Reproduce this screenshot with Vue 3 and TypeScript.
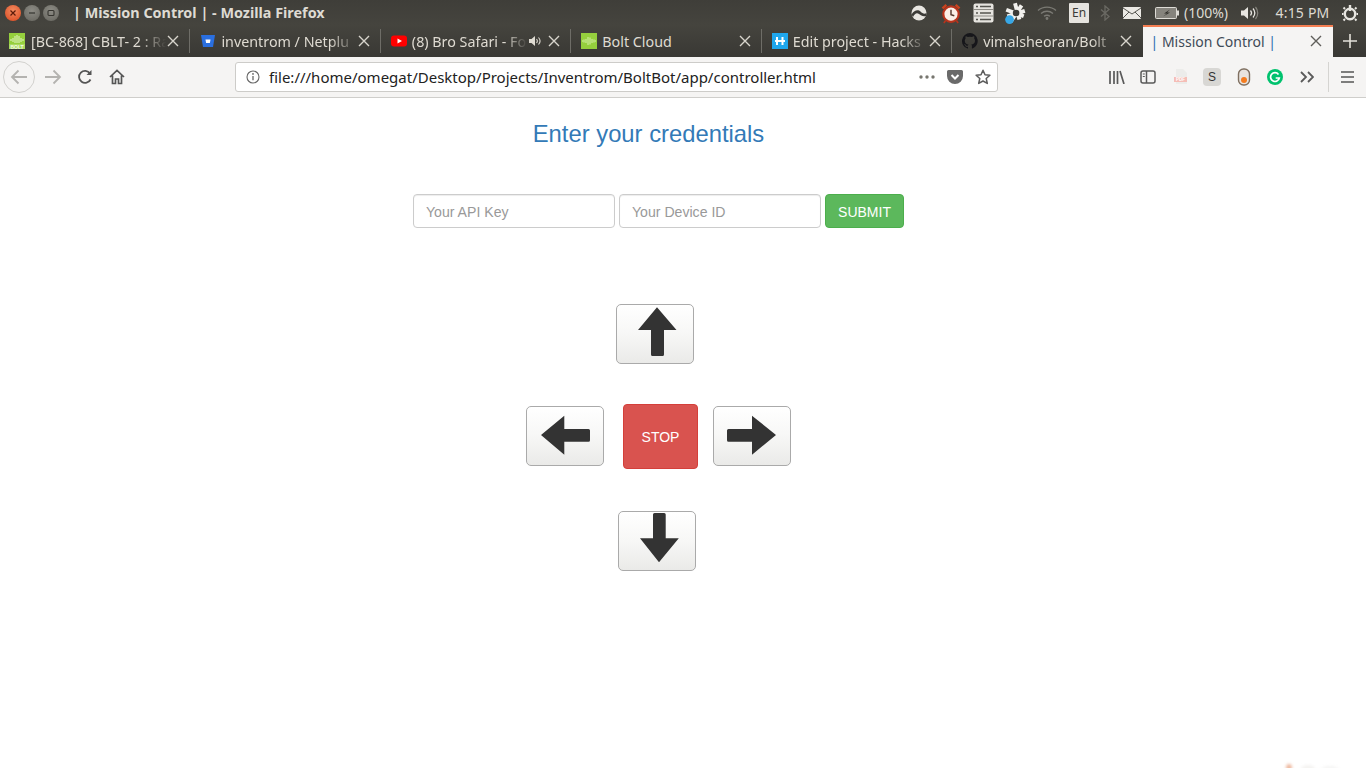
<script setup lang="ts">
const tabs = [
  { title: '[BC-868] CBLT- 2 : Ra', icon: 'bolt' },
  { title: 'inventrom / Netplu', icon: 'bitbucket' },
  { title: '(8) Bro Safari - Fo', icon: 'youtube', audio: true },
  { title: 'Bolt Cloud', icon: 'cloud' },
  { title: 'Edit project - Hacks', icon: 'hackster' },
  { title: 'vimalsheoran/Bolt', icon: 'github' },
]
</script>

<template>
  <div class="page">
    <header class="titlebar">
      <div class="lights">
        <span class="light red"><svg width="8" height="8" viewBox="0 0 8 8"><path d="M1.5 1.5l5 5M6.5 1.5l-5 5" stroke="#5b1b0a" stroke-width="1.2"/></svg></span>
        <span class="light grey"><svg width="8" height="8" viewBox="0 0 8 8"><path d="M1 4h6" stroke="#35342f" stroke-width="1.2"/></svg></span>
        <span class="light grey"><svg width="8" height="8" viewBox="0 0 8 8"><rect x="1" y="1.5" width="6" height="5" rx="1" fill="none" stroke="#35342f" stroke-width="1.1"/></svg></span>
      </div>
      <div class="wintitle">| Mission Control | - Mozilla Firefox</div>
      <div class="tray">
        <svg width="18" height="16" viewBox="0 0 18 16"><circle cx="9" cy="8" r="7.5" fill="#e8e6e1"/><path d="M1.5 9.5c3-5 7-5 9-3s4 3 6 1.5l-.5 3c-3 1-5-.5-7-2s-4-1-6 3z" fill="#3c3b37"/></svg>
        <svg width="22" height="22" viewBox="0 0 20 20"><circle cx="10" cy="11" r="7" fill="#fbeee6" stroke="#b8331c" stroke-width="2"/><path d="M10 7v4.500l3 1" stroke="#55372c" stroke-width="1.3" fill="none"/><path d="M1.500 5l3.500-3.200 1.500 1.500-3.500 3.200zM18.500 5L15 1.800l-1.500 1.500 3.500 3.200z" fill="#c9431f"/><path d="M5 17l-1.500 2M15 17l1.500 2" stroke="#b8331c" stroke-width="1.500"/></svg>
        <svg width="21" height="20" viewBox="0 0 21 20"><rect x=".5" y=".5" width="20" height="19" rx="2" fill="#e6e4df"/><path d="M0 6.500h21M0 13h21" stroke="#8d8b85" stroke-width="1"/><path d="M3 3.500h2M3 10h2M3 16.500h2M7 3.500h11M7 10h11M7 16.500h11" stroke="#55544f" stroke-width="1.600"/></svg>
        <svg width="24" height="24" viewBox="0 0 22 22"><g fill="none" stroke="#f2f1ee" stroke-width="3.600"><path d="M11 2l4 15M17 4L7 19M20 9L4 14M3 8l16 6"/></g><circle cx="12" cy="11" r="3" fill="#3c3b37"/><circle cx="6" cy="17" r="4" fill="#37a7e6"/></svg>
        <svg width="20" height="14" viewBox="0 0 20 14" fill="none" stroke="#7b7a74" stroke-width="1.300"><path d="M1 4.500c5-4.500 13-4.500 18 0M4 7.500c3.500-3 8.500-3 12 0M7 10.300c1.800-1.300 4.200-1.300 6 0"/><circle cx="10" cy="12.500" r=".8" fill="#7b7a74"/></svg>
        <span class="en">En</span>
        <svg width="10" height="16" viewBox="0 0 10 16" fill="none" stroke="#6a6963" stroke-width="1.300"><path d="M1 4.500l8 7-4 3.500V1l4 3.500-8 7"/></svg>
        <svg width="18" height="12" viewBox="0 0 18 12"><rect width="18" height="12" rx="1" fill="#ebe9e4"/><path d="M0 1l9 6 9-6M0 11l6-6M18 11l-6-6" stroke="#55544f" stroke-width="1" fill="none"/></svg>
        <svg class="batt" width="24" height="12" viewBox="0 0 24 12"><rect x=".5" y=".5" width="21" height="11" rx="1" fill="#86847d" stroke="#dedcd6"/><rect x="22" y="3.500" width="2" height="5" fill="#dedcd6"/><path d="M15 2.500L9 6.500l3 0-4 3 7-4-3 0z" fill="#2e2d29"/></svg>
        <span class="traytext">(100%)</span>
        <svg width="20" height="14" viewBox="0 0 20 14" fill="none"><path d="M1 4.500h3l4-3.500v12l-4-3.500H1z" fill="#e8e6e1"/><path d="M10.500 4.500c1.300 1.500 1.300 3.500 0 5M13 2.500c2.200 2.700 2.200 6.300 0 9" stroke="#e8e6e1" stroke-width="1.200"/><path d="M15.500 1c3 3.500 3 8.500 0 12" stroke="#87857e" stroke-width="1.200"/></svg>
        <span class="traytext time">4:15 PM</span>
        <svg width="16" height="18" viewBox="0 0 16 18" fill="none" stroke="#e8e6e1"><circle cx="8" cy="10" r="5.200" stroke-width="2.400"/><path d="M8 1v6" stroke-width="2.400"/><path d="M1.500 10h-1.500M16 10h-1.500M3 15l-1.500 1.500M13 15l1.500 1.500M3 5l-1.500-1.500M13 5l1.500-1.500" stroke-width="2"/></svg>
      </div>
    </header>

    <nav class="tabstrip">
      <div class="tabs">
        <div v-for="tab in tabs" :key="tab.title" class="tab">
          <svg v-if="tab.icon === 'bolt'" class="fav" viewBox="0 0 16 16"><rect width="16" height="16" fill="#95cf3d"/><path d="M2 6v2M4 5v4M6 3v7M8 2v8M10 3v7M12 5v4M14 6v2" stroke="#e4f5c8" stroke-width="1"/><rect y="11" width="16" height="5" fill="#a9d85f"/><text x="8" y="15.500" text-anchor="middle" font-size="5" font-weight="700" font-family="Liberation Sans, sans-serif" fill="#f4fbe6">BOLT</text></svg>
          <svg v-else-if="tab.icon === 'bitbucket'" class="fav" viewBox="0 0 16 16"><path d="M1 2h14l-2 12H3z" fill="#2a6fe0"/><path d="M5.500 6.500h5l-.6 3.500H6.100z" fill="#fff"/></svg>
          <svg v-else-if="tab.icon === 'youtube'" class="fav" viewBox="0 0 16 16"><rect y="2.500" width="16" height="11" rx="3" fill="#f00"/><path d="M6.500 5.500v5L11 8z" fill="#fff"/></svg>
          <svg v-else-if="tab.icon === 'cloud'" class="fav" viewBox="0 0 16 16"><rect width="16" height="16" fill="#95cf3d"/><path d="M1 8h1M3 6.500v3M5 6v4M7 4v8M9 4.500v7M11 6v4M13 6.500v3M15 8h-1" stroke="#d7f0ad" stroke-width="1"/></svg>
          <svg v-else-if="tab.icon === 'hackster'" class="fav" viewBox="0 0 16 16"><rect width="16" height="16" fill="#1fa7ee"/><path d="M5 4v8M10.500 4v8M3 8h10" stroke="#fff" stroke-width="2"/></svg>
          <svg v-else class="fav" viewBox="0 0 16 16"><path d="M8 0a8 8 0 0 0-2.500 15.600c.4.100.5-.2.5-.4v-1.400c-2.200.5-2.700-1-2.700-1-.4-.9-.9-1.200-.9-1.200-.7-.5.100-.5.100-.5.800.100 1.200.8 1.200.8.700 1.200 1.900.9 2.300.7.100-.5.300-.9.500-1.100-1.800-.2-3.700-.9-3.700-4 0-.9.300-1.600.8-2.100-.1-.2-.4-1 .1-2.100 0 0 .7-.2 2.200.8a7.600 7.600 0 0 1 4 0c1.500-1 2.200-.8 2.200-.8.400 1.100.2 1.900.1 2.100.5.600.8 1.300.8 2.100 0 3.100-1.900 3.700-3.700 3.900.3.300.6.700.6 1.500v2.200c0 .2.100.5.600.4A8 8 0 0 0 8 0z" fill="#16161a"/></svg>
          <span class="tabtext" :class="{ fade: tab.title !== 'Bolt Cloud' }">{{ tab.title }}</span>
          <svg v-if="tab.audio" class="audio" width="14" height="14" viewBox="0 0 14 14" fill="none"><path d="M1 5h2.500L7 2v10L3.500 9H1z" fill="#dfdbd2"/><path d="M8.500 5c1 1.200 1 2.800 0 4M10.500 3.500c1.800 2 1.800 5 0 7" stroke="#dfdbd2" stroke-width="1.100"/></svg>
          <svg class="close" width="12" height="12" viewBox="0 0 12 12"><path d="M1 1l10 10M11 1L1 11" stroke="#d8d5cd" stroke-width="1.400"/></svg>
        </div>
        <div class="tab active">
          <span class="tabtext"><i class="pipe">|</i> Mission Control <i class="pipe">|</i></span>
          <svg class="close" width="12" height="12" viewBox="0 0 12 12"><path d="M1 1l10 10M11 1L1 11" stroke="#5f5e5a" stroke-width="1.400"/></svg>
        </div>
      </div>
      <div class="newtab"><svg width="14" height="14" viewBox="0 0 14 14"><path d="M7 0v14M0 7h14" stroke="#e4e1da" stroke-width="1.600"/></svg></div>
    </nav>

    <div class="toolbar">
      <div class="nav">
        <span class="back"><svg width="18" height="16" viewBox="0 0 18 16" fill="none" stroke="#b4b3b0" stroke-width="1.800"><path d="M17 8H2M8.500 1.500L2 8l6.500 6.500"/></svg></span>
        <svg class="fwd" width="18" height="16" viewBox="0 0 18 16" fill="none" stroke="#b4b3b0" stroke-width="1.800"><path d="M1 8h15M9.500 1.500L16 8l-6.500 6.500"/></svg>
        <svg class="reload" width="16" height="16" viewBox="0 0 16 16" fill="none" stroke="#555" stroke-width="1.800"><path d="M13.500 10.500A6 6 0 1 1 13 4.500"/><path d="M14.500 1v5h-5z" fill="#555" stroke="none"/></svg>
        <svg class="home" width="16" height="16" viewBox="0 0 16 16" fill="none" stroke="#555" stroke-width="1.700"><path d="M1 8l7-6.500L15 8M3.500 6.500V14.500h3V10h3v4.500h3V6.500"/></svg>
      </div>
      <div class="urlbar">
        <svg width="14" height="14" viewBox="0 0 14 14" fill="none"><circle cx="7" cy="7" r="6" stroke="#666" stroke-width="1.100"/><path d="M7 6v4.300" stroke="#666" stroke-width="1.300"/><circle cx="7" cy="3.900" r=".9" fill="#666"/></svg>
        <span class="url">file:///home/omegat/Desktop/Projects/Inventrom/BoltBot/app/controller.html</span>
        <svg class="dots" width="16" height="4" viewBox="0 0 16 4" fill="#77766f"><circle cx="2" cy="2" r="1.700"/><circle cx="8" cy="2" r="1.700"/><circle cx="14" cy="2" r="1.700"/></svg>
        <svg class="pocket" width="16" height="14" viewBox="0 0 16 14"><path d="M1.500 0h13A1.500 1.500 0 0 1 16 1.500V6A8 8 0 0 1 0 6V1.500A1.500 1.500 0 0 1 1.500 0z" fill="#6a6a6a"/><path d="M4.500 5L8 8.500 11.500 5" fill="none" stroke="#fff" stroke-width="2"/></svg>
        <svg class="star" width="16" height="16" viewBox="0 0 16 16"><path d="M8 1.300l2 4.500 4.900.5-3.700 3.200 1.100 4.900L8 12l-4.300 2.400 1.100-4.900L1.100 6.300 6 5.800z" fill="none" stroke="#5c5c5c" stroke-width="1.500" stroke-linejoin="round"/></svg>
      </div>
      <div class="tools">
        <svg width="16" height="14" viewBox="0 0 16 14" stroke="#5a5a5a" stroke-width="1.700" fill="none"><path d="M1 1v13M5 1v13M8.500 1v13M11 1l4 13"/></svg>
        <svg width="16" height="14" viewBox="0 0 16 14" fill="none" stroke="#5a5a5a"><rect x="1" y="1" width="14" height="12" rx="2" stroke-width="1.500"/><path d="M6.500 1v12" stroke-width="1.500"/><path d="M2.800 4h2M2.800 6.500h2" stroke-width="1.100"/></svg>
        <svg width="14" height="16" viewBox="0 0 14 16"><path d="M2 0h7l4 4v11H2z" fill="#ececea"/><rect y="8" width="13" height="5" fill="#f5bdb6"/><text x="6.500" y="12.300" text-anchor="middle" font-size="4.500" font-weight="700" font-family="Liberation Sans, sans-serif" fill="#fff">PDF</text></svg>
        <span class="sicon">S</span>
        <svg width="14" height="18" viewBox="0 0 14 18"><rect x="1.500" y="1" width="11" height="16" rx="5" fill="#e9e4df" stroke="#7f6f60" stroke-width="1.400"/><circle cx="7" cy="12" r="3" fill="#f47c20"/></svg>
        <svg width="16" height="16" viewBox="0 0 16 16"><circle cx="8" cy="8" r="8" fill="#00c26e"/><path d="M11.500 5.400A4.400 4.400 0 1 0 12.300 9H8.700" fill="none" stroke="#fff" stroke-width="1.700"/></svg>
        <svg width="14" height="12" viewBox="0 0 14 12" fill="none" stroke="#5a5a5a" stroke-width="1.800"><path d="M1 1l5 5-5 5M8 1l5 5-5 5"/></svg>
        <span class="sep"></span>
        <svg class="menu" width="13" height="12" viewBox="0 0 13 12" stroke="#555" stroke-width="1.600"><path d="M0 1h13M0 6h13M0 11h13"/></svg>
      </div>
    </div>

    <main class="content">
      <h2 class="heading">Enter your credentials</h2>
      <form class="cred" @submit.prevent>
        <input class="field" type="text" placeholder="Your API Key" />
        <input class="field" type="text" placeholder="Your Device ID" />
        <button class="submit" type="submit">SUBMIT</button>
      </form>
      <div class="row up">
        <button class="key" type="button" aria-label="Up">
          <svg width="78" height="60" viewBox="0 0 78 60"><path d="M41 3.300L60.500 26H48v24.500a1.500 1.500 0 0 1-1.500 1.500h-10a1.500 1.500 0 0 1-1.500-1.500V26H22z" fill="#333"/></svg>
        </button>
      </div>
      <div class="row mid">
        <button class="key side" type="button" aria-label="Left">
          <svg width="78" height="60" viewBox="0 0 78 60"><path d="M15 29L38.300 9.700V23h24.200a1.500 1.500 0 0 1 1.500 1.500v9.700a1.500 1.500 0 0 1-1.500 1.500H38.300v13z" fill="#333"/></svg>
        </button>
        <button class="stop" type="button">STOP</button>
        <button class="key side" type="button" aria-label="Right">
          <svg width="78" height="60" viewBox="0 0 78 60"><path d="M63 29L39 9.700V23H15.500a1.500 1.500 0 0 0-1.500 1.500v9.700a1.500 1.500 0 0 0 1.500 1.500H39v13z" fill="#333"/></svg>
        </button>
      </div>
      <div class="row down">
        <button class="key" type="button" aria-label="Down">
          <svg width="78" height="60" viewBox="0 0 78 60"><path d="M41 51.300L60.800 27.300H47.700V3.500A1.500 1.500 0 0 0 46.200 2H36.500A1.500 1.500 0 0 0 35 3.500v23.800H22z" fill="#333"/></svg>
        </button>
      </div>
    </main>
    <div class="smudge"><i class="s1"></i><i class="s2"></i><i class="s3"></i></div>
  </div>
</template>

<style>
html, body { margin: 0; background: #fff; overflow: hidden; }
</style>

<style scoped>
.page { position: relative; width: 1366px; height: 768px; overflow: hidden; background: #fff; font-family: "Noto Sans", "Open Sans", sans-serif; }

.titlebar { height: 25px; display: flex; align-items: center; background: linear-gradient(#3f3e39, #45443e); color: #e0ddd6; }
.lights { display: flex; gap: 3px; padding-left: 5px; width: 70px; box-sizing: border-box; }
.light { width: 16px; height: 16px; border-radius: 50%; display: flex; align-items: center; justify-content: center; }
.light.red { background: radial-gradient(circle at 50% 35%, #f38a5f, #d9481f); }
.light.grey { background: radial-gradient(circle at 50% 35%, #8c8b84, #65645d); }
.wintitle { font-size: 14.4px; font-weight: 700; color: #dedbd3; white-space: nowrap; padding-left: 3px; flex: 1; }
.tray { width: 463px; display: grid; grid-template-columns: 32px 32px 32px 31px 34px 30px 22px 32px 35px 46px 42px 63px 32px; align-items: center; justify-items: center; }
.en { width: 20px; height: 20px; background: #e6e4df; color: #3c3b37; font-size: 12px; line-height: 20px; text-align: center; border-radius: 1px; }
.batt { justify-self: start; margin-left: 7px; }
.traytext { font-size: 14px; color: #dedbd3; white-space: nowrap; }
.time { letter-spacing: .2px; }

.tabstrip { height: 32px; display: flex; background: linear-gradient(#45443e, #393834); }
.tabs { flex: 1; display: grid; grid-template-columns: repeat(7, 1fr); }
.tab { position: relative; display: flex; align-items: center; min-width: 0; padding: 0 11px 0 10px; gap: 5px; color: #dfdbd2; font-size: 14.3px; }
.tab:first-child .fav { margin: 0 1px 0 -1px; }
.tab:not(.active):not(:nth-last-child(2))::after { content: ""; position: absolute; right: 0; top: 4px; bottom: 4px; width: 1px; background: #6e6d67; }
.fav { width: 16px; height: 16px; flex: none; }
.tabtext { flex: 1; min-width: 0; overflow: hidden; white-space: nowrap; }
.fade { margin-right: -7px; -webkit-mask-image: linear-gradient(90deg, #000 78%, transparent 98%); mask-image: linear-gradient(90deg, #000 78%, transparent 98%); }
.close { flex: none; position: relative; }
.audio { flex: none; position: relative; margin-right: 1px; }
.tab.active { background: #f5f4f3; border-top: 2px solid #f47e52; color: #3e4a57; padding: 0 11px 2px 8px; font-size: 14px; }
.pipe { color: #2a6bb0; font-style: normal; }
.newtab { width: 33px; display: flex; align-items: center; justify-content: center; }

.toolbar { height: 41px; box-sizing: border-box; border-bottom: 1px solid #cfcecb; background: #f5f4f3; display: flex; align-items: center; }
.nav { width: 235px; display: flex; align-items: center; padding-left: 3px; box-sizing: border-box; }
.back { width: 32px; height: 32px; box-sizing: border-box; border: 1px solid #d2d1ce; border-radius: 50%; display: flex; align-items: center; justify-content: center; }
.fwd { margin-left: 9px; }
.reload { margin-left: 15px; }
.home { margin-left: 16px; }
.urlbar { width: 763px; height: 30px; box-sizing: border-box; background: #fff; border: 1px solid #cdccc9; border-radius: 3px; display: flex; align-items: center; padding-left: 10px; }
.url { flex: 1; padding-left: 9px; font-size: 15px; color: #222; white-space: nowrap; }
.dots { margin-right: 12px; }
.pocket { margin-right: 12px; }
.star { margin-right: 6px; }
.tools { flex: 1; display: grid; grid-template-columns: 127px 31px 32px 32px 31px 32px 31px 15px 1fr; justify-items: end; align-items: center; padding-right: 12px; }
.sicon { width: 18px; height: 18px; margin-right: -1px; background: #d8d7d4; color: #333; border-radius: 4px; font-size: 12px; line-height: 18px; text-align: center; font-family: "Liberation Sans", sans-serif; }
.sep { width: 1px; height: 30px; background: #d5d4d1; }
.menu { justify-self: end; }

.content { font-family: "Liberation Sans", Arial, sans-serif; padding-top: 23px; }
.heading { margin: 0; padding-right: 69px; text-align: center; font-size: 23.8px; font-weight: 400; line-height: 26px; color: #337ab7; }
.cred { margin-top: 47px; padding-right: 49px; display: flex; justify-content: center; gap: 4px; }
.field { width: 202px; height: 34px; box-sizing: border-box; border: 1px solid #ccc; border-radius: 4px; padding: 7px 12px 5px; font: 14.1px "Liberation Sans", Arial, sans-serif; color: #555; background: #fff; box-shadow: inset 0 1px 1px rgba(0, 0, 0, .075); outline: none; }
.field::placeholder { color: #999; opacity: 1; }
.submit { width: 79px; height: 34px; box-sizing: border-box; border: 1px solid #4cae4c; border-radius: 4px; background: #5cb85c; color: #fff; font: 14px "Liberation Sans", Arial, sans-serif; padding: 2px 0 0; }
.row { display: flex; justify-content: center; }
.up { margin-top: 76px; padding-right: 56px; }
.mid { margin-top: 40px; padding-right: 49px; align-items: flex-start; gap: 19px; }
.mid .stop + .key { margin-left: -4px; }
.side { margin-top: 2px; }
.down { margin-top: 42px; padding-right: 52px; }
.key { width: 78px; height: 60px; box-sizing: border-box; padding: 0; position: relative; border: 1px solid #aaa; border-radius: 5px; background: linear-gradient(#fff, #f7f7f6 50%, #eaeae8); }
.key svg { position: absolute; left: -1px; top: -1px; }
.stop { width: 75px; height: 65px; box-sizing: border-box; border: 1px solid #d43f3a; border-radius: 4px; background: #d9534f; color: #fff; font: 14px "Liberation Sans", Arial, sans-serif; padding: 0; }

.smudge { position: absolute; right: 0; bottom: 0; width: 110px; height: 10px; filter: blur(1.500px); }
.smudge i { position: absolute; display: block; border-radius: 50%; }
.s1 { left: 30px; top: 6px; width: 6px; height: 8px; background: #eeb9a0; }
.s2 { left: 45px; top: 7px; width: 14px; height: 8px; background: #f4f3f1; }
.s3 { left: 65px; top: 8px; width: 18px; height: 8px; background: #f5f5f4; }
</style>
